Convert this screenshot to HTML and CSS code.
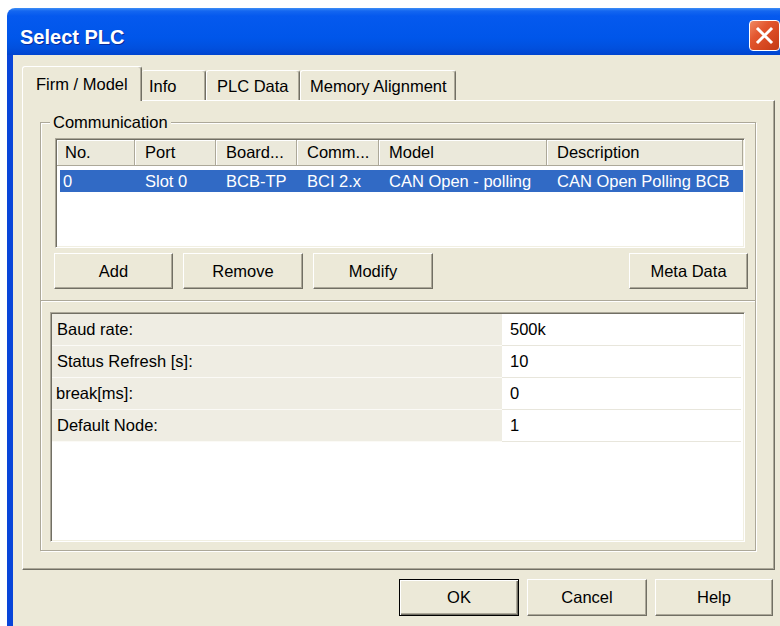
FILE: index.html
```html
<!DOCTYPE html>
<html lang="en">
<head>
<meta charset="utf-8">
<title>Select PLC</title>
<link rel="stylesheet" href="styles.css">
</head>
<body>
<div class="window">
  <div class="titlebar">
    <span class="title">Select PLC</span>
    <div class="close" title="Close">
      <svg width="29" height="29" viewBox="0 0 29 29" aria-hidden="true">
        <path d="M8 8 L21 21 M21 8 L8 21" stroke="#fff" stroke-width="3" stroke-linecap="square"/>
      </svg>
    </div>
  </div>
  <div class="client">
    <div class="tabs">
      <div class="tab tab-firm active">Firm / Model</div>
      <div class="tab tab-info">Info</div>
      <div class="tab tab-data">PLC Data</div>
      <div class="tab tab-mem">Memory Alignment</div>
    </div>
    <div class="panel">
      <div class="group">
        <span class="legend">Communication</span>
        <div class="list">
          <div class="list-head">
            <div class="col c-no">No.</div>
            <div class="col c-port">Port</div>
            <div class="col c-board">Board...</div>
            <div class="col c-comm">Comm...</div>
            <div class="col c-model">Model</div>
            <div class="col c-desc">Description</div>
          </div>
          <div class="list-row selected">
            <div class="col c-no">0</div>
            <div class="col c-port">Slot 0</div>
            <div class="col c-board">BCB-TP</div>
            <div class="col c-comm">BCI 2.x</div>
            <div class="col c-model">CAN Open - polling</div>
            <div class="col c-desc">CAN Open Polling BCB</div>
          </div>
        </div>
        <div class="list-buttons">
          <button class="btn btn-add">Add</button>
          <button class="btn btn-remove">Remove</button>
          <button class="btn btn-modify">Modify</button>
          <button class="btn btn-meta">Meta Data</button>
        </div>
        <div class="separator"></div>
        <div class="props">
          <div class="prop">
            <div class="prop-name">Baud rate:</div>
            <div class="prop-value">500k</div>
          </div>
          <div class="prop">
            <div class="prop-name">Status Refresh [s]:</div>
            <div class="prop-value">10</div>
          </div>
          <div class="prop">
            <div class="prop-name tight">break[ms]:</div>
            <div class="prop-value">0</div>
          </div>
          <div class="prop">
            <div class="prop-name">Default Node:</div>
            <div class="prop-value">1</div>
          </div>
        </div>
      </div>
    </div>
    <div class="dialog-buttons">
      <button class="btn btn-ok">OK</button>
      <button class="btn btn-cancel">Cancel</button>
      <button class="btn btn-help">Help</button>
    </div>
  </div>
</div>
</body>
</html>
```
FILE: styles.css
```css
* {
  box-sizing: border-box;
}

html,
body {
  margin: 0;
  padding: 0;
}

body {
  width: 780px;
  height: 626px;
  overflow: hidden;
  background: #ffffff;
  font-family: "Liberation Sans", Arial, sans-serif;
  font-size: 16.5px;
  color: #000000;
}

/* Window frame */
.window {
  margin: 8px 0 0 7px;
  width: 783px;
}

.titlebar {
  height: 47px;
  border-radius: 8px 8px 0 0;
  background: linear-gradient(180deg,
    #3d8ef6 0px,
    #1466f0 3px,
    #0559ee 8px,
    #0056ea 30px,
    #0150de 40px,
    #0044cf 47px);
  display: flex;
  justify-content: space-between;
  align-items: flex-start;
  padding: 17px 10px 0 13px;
}

.title {
  font-weight: bold;
  font-size: 20px;
  line-height: 24px;
  color: #ffffff;
  text-shadow: 1px 1px 0 #0a2a9a;
}

.close {
  width: 31px;
  height: 31px;
  margin-top: -5px;
  border: 1px solid #ffffff;
  border-radius: 4px;
  background: linear-gradient(135deg, #f08a64 0%, #e3572f 35%, #d4461f 70%, #c23a16 100%);
  display: flex;
  align-items: center;
  justify-content: center;
}

.close svg {
  display: block;
}

.client {
  height: 580px;
  background: #ece9d8;
  border-left: 6px solid #0845d9;
  border-right: 6px solid #0845d9;
  padding: 11px 9px 0 9px;
}

/* Tab strip */
.tabs {
  display: flex;
  align-items: flex-end;
  height: 34px;
}

.tab {
  height: 30px;
  line-height: 31px;
  background: #ece9d8;
  border-top: 1px solid #ffffff;
  border-left: 1px solid #ffffff;
  border-right: 1px solid #716f64;
  box-shadow: inset -1px 0 0 #aca899;
  border-radius: 3px 3px 0 0;
  white-space: nowrap;
}

.tab.active {
  position: relative;
  z-index: 1;
  height: 35px;
  line-height: 34px;
  margin-bottom: -1px;
}

.tab-firm { width: 120px; padding-left: 13px; }
.tab-info { width: 64px; padding-left: 7px; border-left: none; }
.tab-data { width: 94px; padding-left: 10px; }
.tab-mem { width: 156px; padding-left: 9px; }

/* Tab page */
.panel {
  width: 753px;
  height: 470px;
  border: 1px solid;
  border-color: #ffffff #716f64 #716f64 #ffffff;
  box-shadow: inset -1px -1px 0 #aca899;
  padding: 21px 18px 0 17px;
}

.group {
  position: relative;
  height: 429px;
  border: 1px solid #aca899;
  box-shadow: inset 1px 1px 0 #ffffff, 1px 1px 0 #ffffff;
  padding: 15px 10px 8px 14px;
}

.legend {
  position: absolute;
  top: -10px;
  left: 9px;
  padding: 0 3px;
  line-height: 18px;
  background: #ece9d8;
}

/* Device list */
.list {
  height: 110px;
  background: #ffffff;
  border: 1px solid;
  border-color: #aca899 #ffffff #ffffff #aca899;
  box-shadow: inset 1px 1px 0 #716f64, inset -1px -1px 0 #f1efe2;
  padding: 1px;
}

.list-head,
.list-row {
  display: flex;
  white-space: nowrap;
}

.list-head .col {
  height: 26px;
  line-height: 25px;
  background: #ebe9db;
  border-right: 1px solid #aca899;
  border-bottom: 1px solid #aca899;
  box-shadow: inset 1px 1px 0 #ffffff;
  padding-left: 10px;
  overflow: hidden;
}

.list-head .c-no { padding-left: 8px; }

.list-row {
  margin: 4px 0 0 3px;
  height: 22px;
  line-height: 22px;
}

.list-row.selected {
  background: #316ac5;
  color: #ffffff;
}

.list-row .col {
  padding-left: 10px;
  overflow: hidden;
}

.list-row .c-no { width: 75px; padding-left: 3px; }

.c-no { width: 78px; }
.c-port { width: 81px; }
.c-board { width: 81px; }
.c-comm { width: 82px; }
.c-model { width: 168px; }
.c-desc { flex: 1; }

/* Buttons */
.btn {
  font-family: "Liberation Sans", Arial, sans-serif;
  font-size: 16.5px;
  color: #000000;
  background: #ece9d8;
  border: 1px solid;
  border-color: #ffffff #716f64 #716f64 #ffffff;
  box-shadow: inset -1px -1px 0 #aca899;
  padding: 0;
  margin: 0;
  text-align: center;
}

.list-buttons {
  display: flex;
  gap: 10px;
  margin: 5px -3px 0 -1px;
}

.list-buttons .btn {
  height: 36px;
  width: 120px;
}

.list-buttons .btn-add { width: 119px; }
.list-buttons .btn-meta { width: 119px; margin-left: auto; }

.separator {
  height: 2px;
  margin: 11px -10px 0 -14px;
  border-top: 1px solid #aca899;
  border-bottom: 1px solid #ffffff;
}

/* Property grid */
.props {
  height: 230px;
  margin: 10px 0 0 -5px;
  background: #ffffff;
  border: 1px solid;
  border-color: #aca899 #ffffff #ffffff #aca899;
  box-shadow: inset 1px 1px 0 #716f64, inset -1px -1px 0 #f1efe2;
  padding: 1px 3px 1px 1px;
}

.prop {
  display: grid;
  grid-template-columns: 450px 1fr;
  height: 32px;
}

.prop-name {
  background: #efede3;
  border-bottom: 1px solid #fbfaf6;
  line-height: 31px;
  padding-left: 5px;
}

.prop-name.tight {
  padding-left: 4px;
}

.prop-value {
  border-bottom: 1px solid #e8e6dc;
  line-height: 31px;
  padding-left: 8px;
}

/* Dialog buttons */
.dialog-buttons {
  display: flex;
  justify-content: flex-end;
  gap: 8px;
  margin-top: 9px;
  padding-right: 2px;
}

.dialog-buttons .btn {
  height: 37px;
  width: 120px;
}

.dialog-buttons .btn-help { width: 118px; }

.dialog-buttons .btn-ok {
  border: 1px solid #000000;
  box-shadow: inset 1px 1px 0 #ffffff, inset -1px -1px 0 #716f64, inset -2px -2px 0 #aca899;
}
```
